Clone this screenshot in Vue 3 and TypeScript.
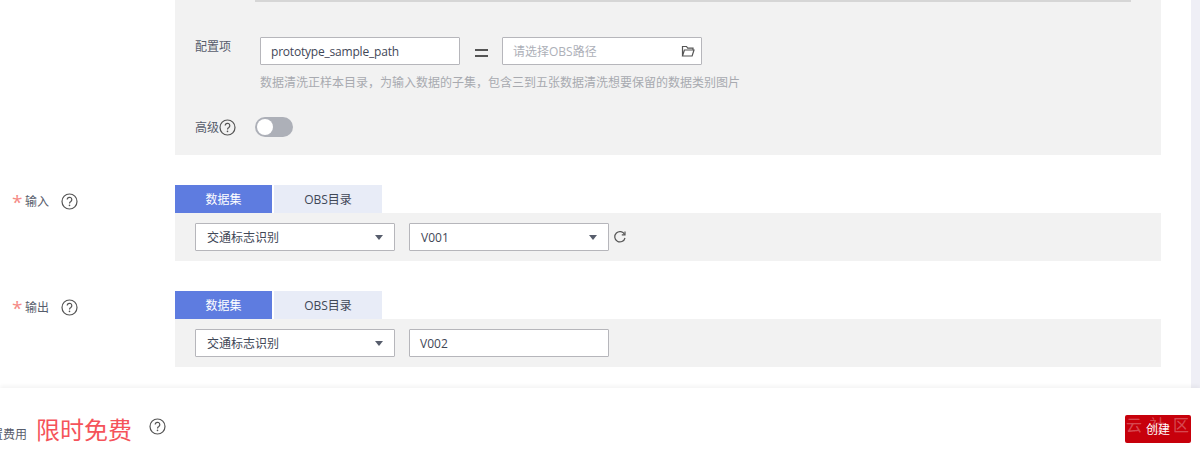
<script setup lang="ts">
interface Section {
  label: string
  version: string
  isSelect: boolean
}
const sections: Section[] = [
  { label: '输入', version: 'V001', isSelect: true },
  { label: '输出', version: 'V002', isSelect: false },
]
</script>

<template>
  <div class="page">
    <div class="upper">
      <div class="content">
        <div class="config">
          <div class="top-bar"></div>
          <div class="config-row">
            <span class="config-label">配置项</span>
            <div class="input key">prototype_sample_path</div>
            <span class="equals"><i></i><i></i></span>
            <div class="input path">
              <span class="placeholder">请选择OBS路径</span>
              <svg class="folder" width="14" height="14" viewBox="0 0 14 14" fill="none" stroke="#555" stroke-width="1.2">
                <path d="M1.5 12V2.5h4l1.2 1.6h5.3V6M1.5 12h9.6L13 6H3.4L1.5 12z" />
              </svg>
            </div>
          </div>
          <p class="hint">数据清洗正样本目录，为输入数据的子集，包含三到五张数据清洗想要保留的数据类别图片</p>
          <div class="advanced">
            <span class="adv-label">高级</span>
            <svg class="help small" width="17" height="17" viewBox="0 0 17 17">
              <circle cx="8.5" cy="8.5" r="7.5" fill="none" stroke="#555" stroke-width="1.2" />
              <path d="M6.2 6.6a2.3 2.3 0 1 1 3.6 1.9c-.8.5-1.3 1-1.3 2" fill="none" stroke="#555" stroke-width="1.2" />
              <circle cx="8.5" cy="12.4" r=".8" fill="#555" />
            </svg>
            <span class="toggle"><span class="knob"></span></span>
          </div>
        </div>

        <section v-for="s in sections" :key="s.label" class="section">
          <div class="field-label">
            <span class="star">*</span>
            <span class="field-name">{{ s.label }}</span>
            <svg class="help" width="17" height="17" viewBox="0 0 17 17">
              <circle cx="8.5" cy="8.5" r="7.5" fill="none" stroke="#555" stroke-width="1.2" />
              <path d="M6.2 6.6a2.3 2.3 0 1 1 3.6 1.9c-.8.5-1.3 1-1.3 2" fill="none" stroke="#555" stroke-width="1.2" />
              <circle cx="8.5" cy="12.4" r=".8" fill="#555" />
            </svg>
          </div>
          <div class="field-body">
            <div class="tabs">
              <div class="tab active">数据集</div>
              <div class="tab">OBS目录</div>
            </div>
            <div class="tab-panel">
              <div class="select first">
                <span>交通标志识别</span>
                <i class="caret"></i>
              </div>
              <div v-if="s.isSelect" class="select version">
                <span>{{ s.version }}</span>
                <i class="caret"></i>
              </div>
              <div v-else class="select version plain">
                <span>{{ s.version }}</span>
              </div>
              <svg v-if="s.isSelect" class="refresh" width="14" height="14" viewBox="0 0 14 14" fill="none" stroke="#555" stroke-width="1.2">
                <path d="M11.6 4.4A5.2 5.2 0 1 0 12 8" />
                <path d="M12 1.6v3.2H8.8" />
              </svg>
            </div>
          </div>
        </section>
      </div>
      <div class="strip"></div>
    </div>

    <footer class="footer">
      <div class="price">
        <span class="fee-label">配置费用</span>
        <span class="free">限时免费</span>
        <svg class="help fee-help" width="17" height="17" viewBox="0 0 17 17">
          <circle cx="8.5" cy="8.5" r="7.5" fill="none" stroke="#555" stroke-width="1.2" />
          <path d="M6.2 6.6a2.3 2.3 0 1 1 3.6 1.9c-.8.5-1.3 1-1.3 2" fill="none" stroke="#555" stroke-width="1.2" />
          <circle cx="8.5" cy="12.4" r=".8" fill="#555" />
        </svg>
      </div>
      <button class="create" type="button">
        <span class="watermark">云社区</span>
        <span class="create-text">创建</span>
      </button>
    </footer>
  </div>
</template>

<style>
html, body { margin: 0; padding: 0; background: #fff; overflow: hidden; }
</style>

<style scoped>
.page {
  width: 1200px;
  height: 449px;
  display: flex;
  flex-direction: column;
  overflow: hidden;
  font-family: "Open Sans", "Noto Sans CJK SC", sans-serif;
  font-size: 12px;
  color: #575d6c;
}
.upper { display: flex; height: 388px; flex: none; }
.content { width: 1191px; flex: none; background: #fff; }
.strip { flex: 1; background: #efeff6; }

.config {
  box-sizing: border-box;
  width: 986px;
  height: 155px;
  margin-left: 175px;
  padding: 0 20px;
  background: #f2f2f2;
}
.top-bar { height: 2px; width: 876px; margin-left: 60px; background: #d6d6d6; }
.config-row { display: flex; align-items: center; margin-top: 35px; height: 28px; }
.config-label { width: 65px; flex: none; position: relative; top: -5px; }
.input {
  box-sizing: border-box;
  width: 200px;
  height: 28px;
  border: 1px solid #b6b6bb;
  border-radius: 1px;
  background: #fff;
  display: flex;
  align-items: center;
  justify-content: space-between;
  padding: 0 10px;
  color: #3f4757;
}
.key { letter-spacing: -0.2px; }
.equals { width: 42px; flex: none; display: flex; flex-direction: column; align-items: center; gap: 4px; padding-top: 3px; }
.equals i { display: block; width: 13px; height: 2px; background: #555; }
.placeholder { color: #adb0b8; }
.folder { margin-right: -4px; }
.hint { margin: 9px 0 0 65px; font-size: 12px; line-height: 18px; color: #a8aab0; white-space: nowrap; }
.advanced { display: flex; align-items: center; height: 20px; margin-top: 25px; }
.adv-label { width: 24px; flex: none; }
.help { flex: none; }
.small { margin-left: 0; }
.toggle {
  width: 38px;
  height: 20px;
  margin-left: 19px;
  border-radius: 10px;
  background: #adb0b8;
  display: flex;
  align-items: center;
  padding-left: 2px;
  box-sizing: border-box;
}
.knob { width: 16px; height: 16px; border-radius: 50%; background: #fff; }

.section { display: flex; margin-top: 30px; }
.field-label { width: 175px; flex: none; display: flex; align-items: center; height: 32px; padding-left: 12px; box-sizing: border-box; }
.star { color: #f58a85; font-size: 19px; width: 13px; line-height: 19px; position: relative; top: 1px; }
.field-name { width: 36px; flex: none; }
.field-body { width: 986px; }
.tabs { display: flex; gap: 2px; height: 28px; }
.tab {
  width: 108px;
  background: #e8ecf7;
  display: flex;
  align-items: center;
  justify-content: center;
  color: #3f4757;
}
.tab.active { width: 97px; background: #5e7ce0; color: #fff; }
.tab-panel {
  height: 48px;
  box-sizing: border-box;
  padding: 10px 20px;
  background: #f2f2f2;
  display: flex;
  align-items: center;
}
.select {
  box-sizing: border-box;
  width: 200px;
  height: 28px;
  border: 1px solid #b6b6bb;
  border-radius: 1px;
  background: #fff;
  display: flex;
  align-items: center;
  justify-content: space-between;
  padding: 0 11px;
  color: #3f4757;
}
.version { margin-left: 14px; }
.plain { padding-left: 10px; }
.caret { width: 0; height: 0; border-left: 4px solid transparent; border-right: 4px solid transparent; border-top: 5px solid #575d6c; }
.refresh { margin-left: 4px; }

.footer {
  flex: 1;
  background: #fff;
  box-shadow: 0 -2px 4px rgba(0, 0, 0, 0.05);
  display: flex;
  align-items: center;
  justify-content: space-between;
  padding: 0 9px 0 0;
  position: relative;
}
.price { display: flex; align-items: center; width: 170px; margin-left: -21px; margin-top: 22px; }
.fee-label { width: 57px; flex: none; font-size: 12px; position: relative; top: 4px; }
.free { font-size: 24px; color: #f5535a; width: 113px; flex: none; line-height: 30px; }
.fee-help { position: relative; top: -3px; }
.create {
  position: relative;
  width: 66px;
  height: 28px;
  margin-top: 21px;
  padding: 0;
  border: none;
  border-radius: 2px;
  background: #c7000b;
  color: #fff;
  font: inherit;
  display: flex;
  align-items: center;
  justify-content: center;
}
.watermark {
  position: absolute;
  left: 1px;
  top: -3px;
  font-size: 16px;
  letter-spacing: 7.5px;
  white-space: nowrap;
  color: rgba(255, 255, 255, 0.3);
}
.create-text { position: relative; }
</style>
